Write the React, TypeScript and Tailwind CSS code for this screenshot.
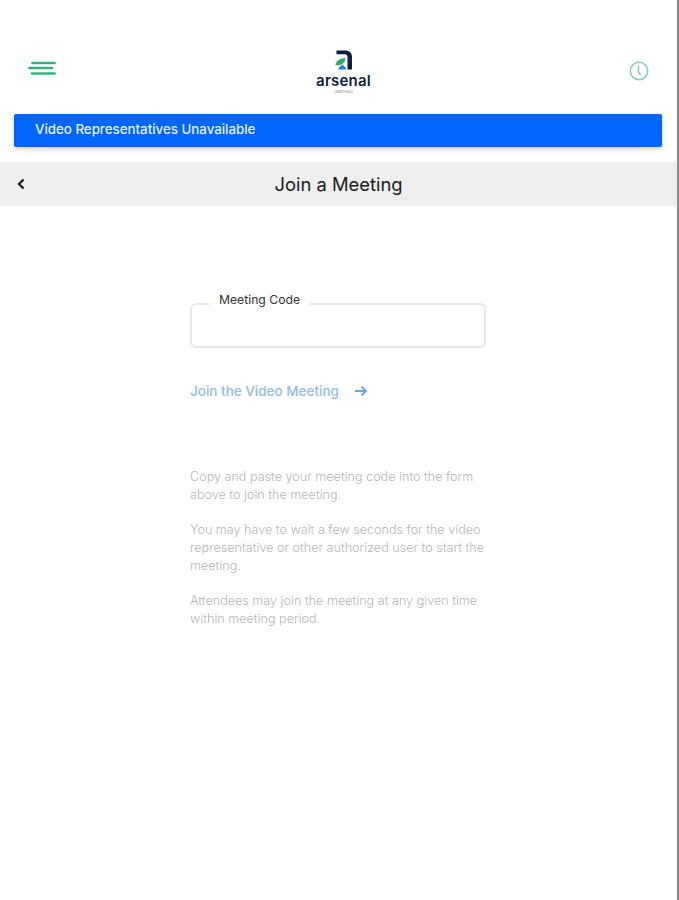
/**
 * JoinMeeting — video meeting code entry screen.
 */
import React from 'react';

const FONT = "font-['Inter','Liberation_Sans',sans-serif]";

function MenuIcon() {
  return (
    <svg width="28" height="16" viewBox="0 0 28 16" fill="none" stroke="#2fb37c" strokeWidth="2.700" strokeLinecap="round">
      <path d="M4.500 3H26.500" />
      <path d="M1.500 8H24" />
      <path d="M4 13.500H26.500" />
    </svg>
  );
}

function ClockIcon() {
  return (
    <svg width="20" height="20" viewBox="0 0 20 20" fill="none" stroke="#86d0b2" strokeWidth="1.600" strokeLinecap="round">
      <circle cx="10" cy="10" r="8.700" />
      <path d="M9.400 5.200V10.400L11.400 13.600" />
    </svg>
  );
}

function Logo() {
  return (
    <div className="flex flex-col items-center">
      <svg className="ml-[2px]" width="18" height="20" viewBox="0 0 18 20">
        <path d="M1.500 0.500H10C14.500 0.500 17 3 17 7V19.500H12.500V7C12.500 5 11.500 4.200 10 4.200H1.500Z" fill="#101d45" />
        <path d="M0.500 15.500C0.500 11 4.500 8.500 10.500 8C10.500 12.500 7 15.500 0.500 15.500Z" fill="#2fa86b" />
        <path d="M7.500 14.500L11 18V19.500H3.500C3 18 5 16 7.500 14.500Z" fill="#2e7fe0" />
      </svg>
      <span className="mt-[3px] text-[15px] font-semibold leading-[15px] tracking-[0.2px] text-[#101d45]">arsenal</span>
      <span className="mt-[2px] text-[4px] leading-[4px] text-[#777]">UNITHOU</span>
    </div>
  );
}

export default function App() {
  return (
    <div className={`${FONT} h-[900px] w-[679px] overflow-hidden border-r-2 border-[#8c8c8c] bg-white`}>
      <header className="flex h-[114px] items-start justify-between pl-[28px] pr-[28px]">
        <div className="mt-[60px]"><MenuIcon /></div>
        <div className="ml-[2px] mt-[50px]"><Logo /></div>
        <div className="mt-[61px]"><ClockIcon /></div>
      </header>

      <div className="ml-[14px] mr-[15px] flex h-[33px] items-center rounded-[2px] bg-[#0066ff] pb-[2px] pl-[21px] text-[13.300px] font-medium text-[#e8f0ff] shadow-[0_2px_5px_rgba(0,0,0,0.2)]">
        Video Representatives Unavailable
      </div>

      <div className="mt-[15px] flex h-[44px] items-center bg-[#eeeeee] pl-[17px]">
        <svg width="8" height="12" viewBox="0 0 8 12" fill="none" stroke="#111" strokeWidth="2.200">
          <path d="M6.500 1.500L2 6L6.500 10.500" />
        </svg>
        <h1 className="ml-[-8px] flex-1 pr-[17px] pt-[2px] text-center text-[18.400px] font-normal text-[#1a1a1a]">Join a Meeting</h1>
      </div>

      <main className="ml-[190px] mt-[87px] w-[296px]">
        <fieldset className="h-[55px] rounded-[6px] border-2 border-[#e6e6e6] pl-[17px]">
          <legend className="px-[10px] pb-[7px] text-[12.200px] leading-[14px] text-[#333]">Meeting Code</legend>
        </fieldset>

        <div className="mt-[33px] flex items-center text-[13.500px] font-medium text-[#91bdea]">
          <span>Join the Video Meeting</span>
          <svg className="ml-[15px]" width="13" height="12" viewBox="0 0 13 12" fill="none" stroke="#6aa6e6" strokeWidth="1.800">
            <path d="M1 6H12M7.500 1.500L12 6L7.500 10.500" />
          </svg>
        </div>

        <div className="mt-[67px] space-y-[17px] text-[12.600px] font-light leading-[18px] text-[#b5b5b5]">
          <p>Copy and paste your meeting code into the form above to join the meeting.</p>
          <p>You may have to wait a few seconds for the video representative or other authorized user to start the meeting.</p>
          <p>Attendees may join the meeting at any given time within meeting period.</p>
        </div>
      </main>
    </div>
  );
}
